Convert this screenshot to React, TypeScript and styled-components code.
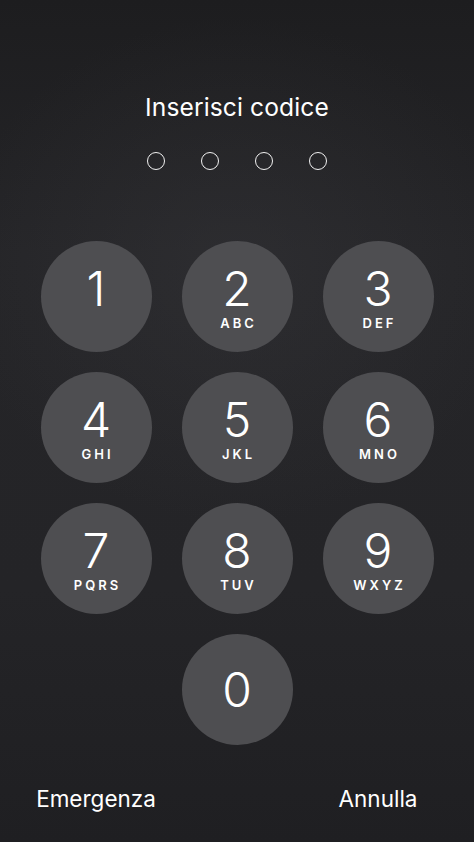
import React from 'react';
import styled, { createGlobalStyle } from 'styled-components';

const GlobalStyle = createGlobalStyle`
  html, body {
    margin: 0;
    padding: 0;
    background: #222225;
  }
  * {
    box-sizing: border-box;
  }
`;

const Screen = styled.div`
  width: 474px;
  height: 842px;
  display: flex;
  flex-direction: column;
  align-items: center;
  overflow: hidden;
  font-family: Inter, 'Noto Sans', sans-serif;
  color: #ffffff;
  background:
    radial-gradient(ellipse 60% 30% at 50% 32%, rgba(60, 60, 64, 0.35), transparent),
    linear-gradient(180deg, #1d1d1f 0%, #252528 30%, #242427 70%, #1f1f22 100%);
`;

const Title = styled.div`
  margin-top: 91px;
  font-size: 24.6px;
  line-height: 32px;
  font-weight: 400;
  letter-spacing: 0.1px;
`;

const Dots = styled.div`
  margin-top: 29px;
  display: flex;
  gap: 36px;
`;

const Dot = styled.span`
  width: 18px;
  height: 18px;
  border-radius: 50%;
  border: 1.8px solid #f2f2f2;
`;

const Pad = styled.div`
  margin-top: 71px;
  display: grid;
  grid-template-columns: repeat(3, 111px);
  column-gap: 30px;
  row-gap: 20px;
`;

const Key = styled.button<{ $col?: number }>`
  width: 111px;
  height: 111px;
  border-radius: 50%;
  border: none;
  padding: 0;
  background: #4e4e51;
  color: #ffffff;
  font-family: inherit;
  display: flex;
  flex-direction: column;
  align-items: center;
  justify-content: center;
  grid-column: ${(p) => p.$col ?? 'auto'};
`;

// digits with a letter line sit a little higher than the lone 0
const Digit = styled.span<{ $sub?: boolean }>`
  font-size: 48px;
  line-height: 40px;
  font-weight: 300;
  margin-top: ${(p) => (p.$sub ? '5px' : '0')};
`;

const Letters = styled.span`
  font-size: 13px;
  line-height: 13px;
  font-weight: 600;
  letter-spacing: 3px;
  margin-right: -3px;
  margin-top: 8px;
`;

const Spacer = styled.span`
  height: 21px;
`;

const Footer = styled.div`
  margin-top: 40px;
  display: grid;
  grid-template-columns: repeat(3, 111px);
  column-gap: 30px;
`;

const FooterButton = styled.span<{ $col: number }>`
  grid-column: ${(p) => p.$col};
  justify-self: center;
  white-space: nowrap;
  font-size: 22.5px;
  line-height: 28px;
  font-weight: 400;
`;

const keys: { d: string; l: string }[] = [
  { d: '1', l: '' },
  { d: '2', l: 'ABC' },
  { d: '3', l: 'DEF' },
  { d: '4', l: 'GHI' },
  { d: '5', l: 'JKL' },
  { d: '6', l: 'MNO' },
  { d: '7', l: 'PQRS' },
  { d: '8', l: 'TUV' },
  { d: '9', l: 'WXYZ' },
];

export default function App() {
  return (
    <>
      <GlobalStyle />
      <Screen>
        <Title>Inserisci codice</Title>
        <Dots>
          {[0, 1, 2, 3].map((i) => (
            <Dot key={i} />
          ))}
        </Dots>
        <Pad>
          {keys.map((k) => (
            <Key key={k.d}>
              <Digit $sub>{k.d}</Digit>
              {k.l ? <Letters>{k.l}</Letters> : <Spacer />}
            </Key>
          ))}
          <Key $col={2}>
            <Digit>0</Digit>
          </Key>
        </Pad>
        <Footer>
          <FooterButton $col={1}>Emergenza</FooterButton>
          <FooterButton $col={3}>Annulla</FooterButton>
        </Footer>
      </Screen>
    </>
  );
}
